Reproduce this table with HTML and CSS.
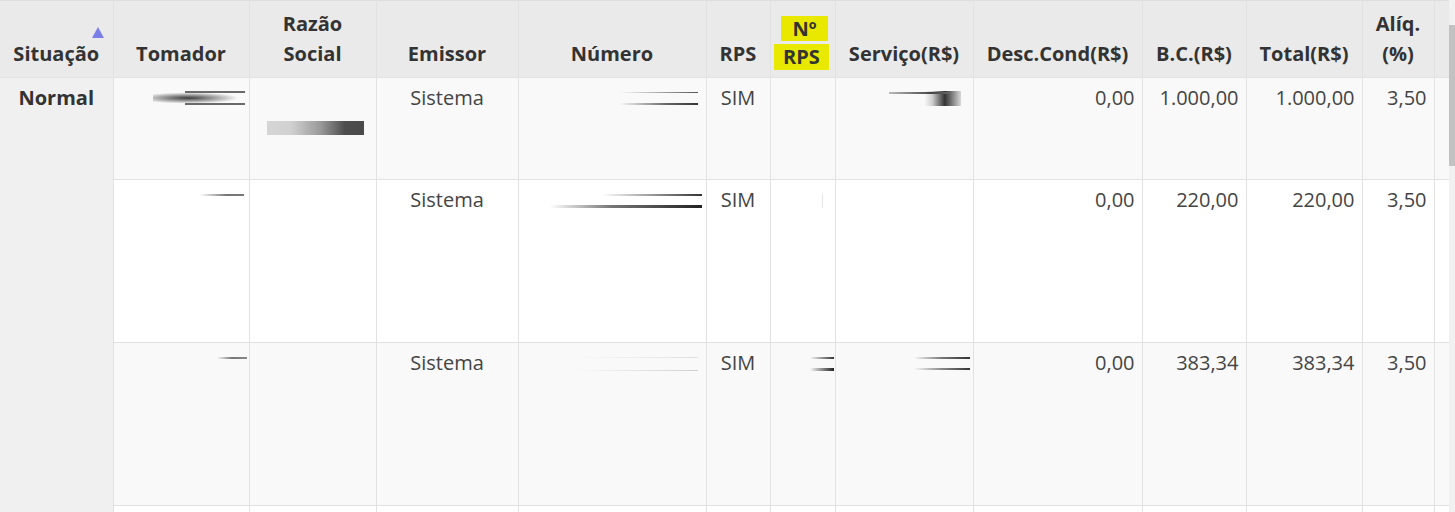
FILE: index.html
```html
<!DOCTYPE html>
<html lang="pt-BR">
<head>
<meta charset="utf-8">
<title>Notas</title>
<link rel="stylesheet" href="styles.css">
</head>
<body>
<div class="frame">
  <div class="grid-wrap">
    <table class="grid">
      <colgroup>
        <col class="c-sit"><col class="c-tom"><col class="c-raz"><col class="c-emi"><col class="c-num"><col class="c-rps"><col class="c-nrps"><col class="c-serv"><col class="c-desc"><col class="c-bc"><col class="c-tot"><col class="c-aliq"><col class="c-pad">
      </colgroup>
      <thead>
        <tr>
          <th class="sorted">Situação<span class="sort-arrow"></span></th>
          <th>Tomador</th>
          <th>Razão Social</th>
          <th>Emissor</th>
          <th>Número</th>
          <th>RPS</th>
          <th><span class="hl hl-a">Nº</span><span class="hl hl-b">RPS</span></th>
          <th>Serviço(R$)</th>
          <th>Desc.Cond(R$)</th>
          <th>B.C.(R$)</th>
          <th>Total(R$)</th>
          <th>Alíq. (%)</th>
          <th></th>
        </tr>
      </thead>
      <tbody>
        <tr class="row-odd r1">
          <td class="sit" rowspan="4">Normal</td>
          <td class="redact"><div class="blur b-tom1"></div></td>
          <td class="redact"><div class="blur b-raz1"></div></td>
          <td class="center">Sistema</td>
          <td class="redact"><div class="blur b-num1"></div></td>
          <td class="center">SIM</td>
          <td></td>
          <td class="redact"><div class="blur b-serv1"></div></td>
          <td class="num">0,00</td>
          <td class="num">1.000,00</td>
          <td class="num">1.000,00</td>
          <td class="num">3,50</td>
          <td></td>
        </tr>
        <tr class="row-even r2">
          <td class="redact"><div class="blur b-tom2"></div></td>
          <td></td>
          <td class="center">Sistema</td>
          <td class="redact"><div class="blur b-num2"></div></td>
          <td class="center">SIM</td>
          <td class="redact"><div class="blur b-nrps2"></div></td>
          <td></td>
          <td class="num">0,00</td>
          <td class="num">220,00</td>
          <td class="num">220,00</td>
          <td class="num">3,50</td>
          <td></td>
        </tr>
        <tr class="row-odd r3">
          <td class="redact"><div class="blur b-tom3"></div></td>
          <td></td>
          <td class="center">Sistema</td>
          <td class="redact"><div class="blur b-num3"></div></td>
          <td class="center">SIM</td>
          <td class="redact"><div class="blur b-nrps3"></div></td>
          <td class="redact"><div class="blur b-serv3"></div></td>
          <td class="num">0,00</td>
          <td class="num">383,34</td>
          <td class="num">383,34</td>
          <td class="num">3,50</td>
          <td></td>
        </tr>
        <tr class="row-even r4">
          <td></td><td></td><td></td><td></td><td></td><td></td><td></td><td></td><td></td><td></td><td></td><td></td>
        </tr>
      </tbody>
    </table>
  </div>
  <div class="scrollbar"><div class="thumb"></div></div>
</div>
</body>
</html>
```
FILE: styles.css
```css
html, body {
  margin: 0;
  padding: 0;
  background: #ffffff;
}
body {
  font-family: "Open Sans", "Noto Sans", sans-serif;
  font-size: 20px;
  color: #444;
  overflow: hidden;
  height: 512px;
}
.frame {
  display: flex;
  width: 1455px;
  height: 512px;
  overflow: hidden;
}
.grid-wrap {
  width: 1449px;
  flex: none;
  overflow: hidden;
}
.grid {
  table-layout: fixed;
  border-collapse: collapse;
  width: 1449px;
}
.c-sit { width: 113px; }
.c-tom { width: 136px; }
.c-raz { width: 127px; }
.c-emi { width: 142px; }
.c-num { width: 188px; }
.c-rps { width: 64px; }
.c-nrps { width: 65px; }
.c-serv { width: 138px; }
.c-desc { width: 169px; }
.c-bc { width: 104px; }
.c-tot { width: 116px; }
.c-aliq { width: 72px; }
.c-pad { width: 15px; }

th {
  background: #eaeaea;
  color: #333;
  font-weight: 700;
  line-height: 30px;
  height: 60px;
  padding: 8px 4px 8px;
  vertical-align: bottom;
  text-align: center;
  border: 1px solid #e2e2e2;
  border-top: 1px solid #dedede;
}
th:first-child { border-left: none; }
th.sorted { position: relative; }
.sort-arrow {
  position: absolute;
  right: 9px;
  top: 26px;
  width: 0;
  height: 0;
  border-left: 6px solid transparent;
  border-right: 6px solid transparent;
  border-bottom: 11px solid #7b7ee6;
}
.hl {
  display: block;
  background: #e9e900;
  margin-left: auto;
  margin-right: auto;
}
.hl-a {
  width: 47px;
  line-height: 25px;
  margin-bottom: 3px;
  position: relative;
  left: 2px;
}
.hl-b {
  width: 55px;
  line-height: 26px;
  margin-bottom: -1px;
  position: relative;
  left: -1px;
}

td {
  border: 1px solid #e2e2e2;
  line-height: 30px;
  padding: 5px 7px;
  vertical-align: top;
  white-space: nowrap;
  overflow: hidden;
}
.row-odd td { background: #f9f9f9; }
.row-even td { background: #ffffff; }
td.sit {
  background: #f0f0f0 !important;
  font-weight: 700;
  color: #333;
  text-align: center;
  border-left: none;
  border-top: none;
  border-bottom: none;
}
.r1 { height: 102px; }
.r2 { height: 163px; }
.r3 { height: 163px; }
.r4 { height: 40px; }
.center { text-align: center; }
.num { text-align: right; }
.redact { padding: 0; position: relative; }

.blur { position: absolute; }
.b-tom1 {
  left: 39px; top: 13px; width: 92px; height: 14px;
  background:
    linear-gradient(#6a6a6a, #6a6a6a) right 0 top 0 / 60px 2px no-repeat,
    linear-gradient(#6a6a6a, #6a6a6a) right 0 bottom 0 / 60px 2px no-repeat,
    radial-gradient(ellipse 55% 40% at 38% 50%, #3c3c3c, rgba(255,255,255,0) 100%);
}
.b-raz1 {
  left: 17px; top: 43px; width: 97px; height: 14px;
  background: linear-gradient(90deg, #d6d6d6 0%, #d0d0d0 25%, #9a9a9a 55%, #4e4e4e 80%, #4a4a4a 100%);
}
.b-num1 {
  right: 8px; top: 14px; width: 78px; height: 13px;
  background:
    linear-gradient(90deg, rgba(255,255,255,0), #888 70%, #555) right 0 top 0 / 100% 1px no-repeat,
    linear-gradient(90deg, rgba(255,255,255,0), #666 60%, #333) right 0 bottom 0 / 100% 2px no-repeat;
}
.b-serv1 {
  right: 12px; top: 13px; width: 72px; height: 15px;
  background:
    linear-gradient(90deg, #bbb, #444 70%, #666) left 0 top 1px / 60px 2px no-repeat,
    linear-gradient(90deg, rgba(240,240,240,0.3), #cfcfcf 20%, #333 55%, #d8d8d8 100%) right 0 top 0 / 36px 15px no-repeat;
}
.b-tom2 {
  right: 5px; top: 14px; width: 44px; height: 2px;
  background: linear-gradient(90deg, rgba(255,255,255,0), #777 60%, #777);
}
.b-num2 {
  right: 4px; top: 14px; width: 152px; height: 14px;
  background:
    linear-gradient(90deg, rgba(255,255,255,0), #999 50%, #333) right 0 top 0 / 100px 2px no-repeat,
    linear-gradient(90deg, rgba(255,255,255,0), #777 40%, #222) right 0 bottom 0 / 100% 3px no-repeat;
}
.b-nrps2 {
  right: 12px; top: 14px; width: 1px; height: 14px;
  background: #e6e6e6;
}
.b-tom3 {
  right: 2px; top: 14px; width: 30px; height: 2px;
  background: linear-gradient(90deg, rgba(255,255,255,0), #777 50%, #888);
}
.b-num3 {
  right: 8px; top: 14px; width: 124px; height: 14px;
  background:
    linear-gradient(90deg, rgba(255,255,255,0), #e0e0e0) right 0 top 0 / 100% 1px no-repeat,
    linear-gradient(90deg, rgba(255,255,255,0), #d0d0d0) right 0 bottom 0 / 100% 1px no-repeat;
}
.b-nrps3 {
  right: 1px; top: 14px; width: 24px; height: 14px;
  background:
    linear-gradient(90deg, rgba(255,255,255,0), #333) right 0 top 0 / 100% 2px no-repeat,
    linear-gradient(90deg, rgba(255,255,255,0), #222) right 0 bottom 0 / 100% 3px no-repeat;
}
.b-serv3 {
  right: 3px; top: 14px; width: 56px; height: 13px;
  background:
    linear-gradient(90deg, rgba(255,255,255,0), #777 50%, #333) right 0 top 0 / 100% 2px no-repeat,
    linear-gradient(90deg, rgba(255,255,255,0), #888 50%, #333) right 0 bottom 0 / 100% 2px no-repeat;
}

.scrollbar {
  width: 6px;
  flex: none;
  background: #f1f1f1;
  display: flex;
  flex-direction: column;
  padding-top: 25px;
  box-sizing: border-box;
}
.thumb {
  width: 6px;
  height: 141px;
  background: #c2c2c2;
}
```
